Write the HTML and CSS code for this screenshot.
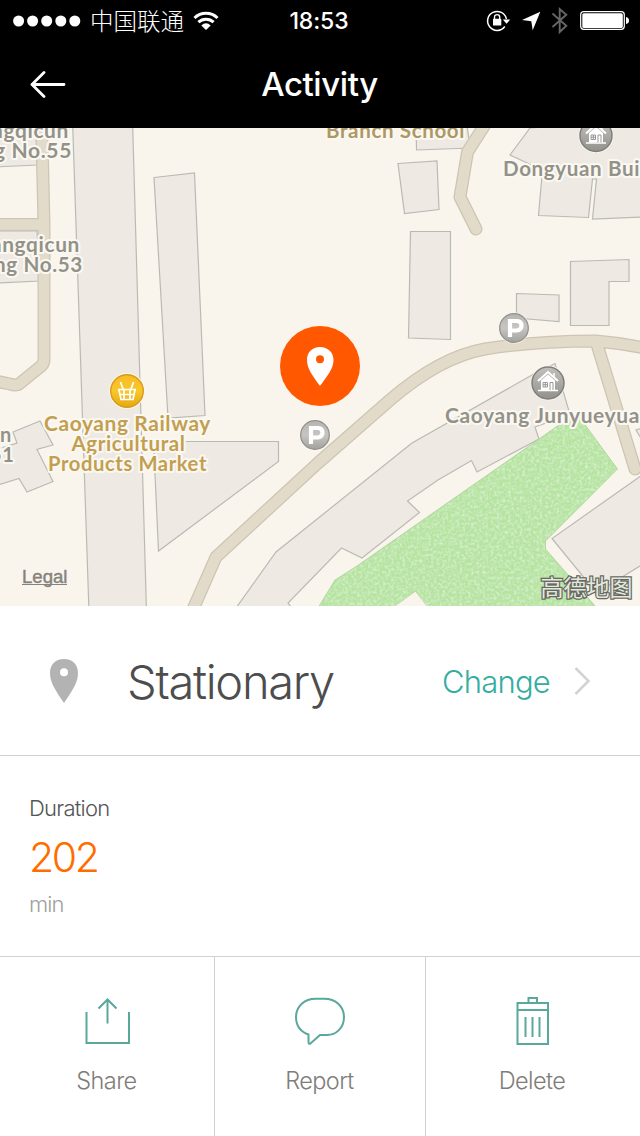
FILE: index.html
```html
<!DOCTYPE html>
<html lang="en">
<head>
<meta charset="utf-8">
<title>Activity</title>
<link rel="stylesheet" href="styles.css">
</head>
<body>
<main class="screen">
  <header class="header">
    <div class="status">
      <div class="status-left">
        <svg class="dots" width="68" height="12" viewBox="0 0 68 12" fill="#fff"><circle cx="5.6" cy="6" r="5.5"/><circle cx="19.6" cy="6" r="5.5"/><circle cx="33.7" cy="6" r="5.5"/><circle cx="47.8" cy="6" r="5.5"/><circle cx="61.8" cy="6" r="5.5"/></svg>
        <span class="carrier">中国联通</span>
        <svg class="wifi" width="26" height="20" viewBox="0 0 26 20" fill="none" stroke="#fff" stroke-width="3"><path d="M1.500 7A16.500 16.500 0 0 1 24.500 7M5.400 11.200A11 11 0 0 1 20.600 11.200"/><path d="M8.300 14.400Q13 10.200 17.700 14.400L13 19Z" fill="#fff" stroke="none"/></svg>
      </div>
      <span class="time">18:53</span>
      <svg class="status-right" width="144" height="32" viewBox="486 5 144 32">
        <path d="M504.800 26.500A9.500 9.500 0 1 1 506.400 19" fill="none" stroke="#fff" stroke-width="1.500"/>
        <path d="M502.800 19.500H510.200L506.500 23.800Z" fill="#fff"/>
        <rect x="493" y="18.800" width="8.300" height="6.700" rx=".6" fill="#fff"/>
        <path d="M494.500 19V17.200A2.600 2.600 0 0 1 499.700 17.200V19" fill="none" stroke="#fff" stroke-width="1.400"/>
        <path d="M540.300 11.800L532.700 30.200L531.300 21.300L522 20Z" fill="#fff"/>
        <path d="M552.500 13.500L566.300 25.800L559.700 32V9L566.300 14.800L552.500 27" fill="none" stroke="#666" stroke-width="1.900"/>
        <rect x="580.700" y="11.700" width="43.600" height="17.600" rx="3" fill="none" stroke="#fff" stroke-width="1.200"/>
        <rect x="582.300" y="13.200" width="40.500" height="14.700" rx="1.500" fill="#fff"/>
        <path d="M626 17Q629 17.500 629 20.500T626 24Z" fill="#fff"/>
      </svg>
    </div>
    <nav class="nav">
      <svg class="back" width="36" height="28" viewBox="0 0 36 28" fill="none" stroke="#fff" stroke-width="2.800" stroke-linecap="round" stroke-linejoin="round"><path d="M34 14.500H2M14 2.500L2 14.500L14 26.500"/></svg>
      <h1 class="title">Activity</h1>
    </nav>
  </header>

  <svg class="map" width="640" height="478" viewBox="0 128 640 478">
    <defs>
      <filter id="grain" x="0" y="0" width="100%" height="100%">
        <feTurbulence type="fractalNoise" baseFrequency=".35" numOctaves="2" seed="4"/>
        <feColorMatrix values="0 0 0 0 .81  0 0 0 0 .93  0 0 0 0 .75  1.400 0 0 0 -.55"/>
        <feComposite in2="SourceGraphic" operator="in" result="n"/>
        <feMerge><feMergeNode in="SourceGraphic"/><feMergeNode in="n"/></feMerge>
      </filter>
      <linearGradient id="gray" x2="0" y2="1"><stop stop-color="#c2c1be"/><stop offset="1" stop-color="#92918c"/></linearGradient>
      <linearGradient id="silver" x2="0" y2="1"><stop stop-color="#b5b4b1"/><stop offset=".5" stop-color="#c6c5c2"/><stop offset="1" stop-color="#a2a19d"/></linearGradient>
      <linearGradient id="gold" x2="0" y2="1"><stop stop-color="#fbbb25"/><stop offset=".5" stop-color="#f7c82a"/><stop offset="1" stop-color="#e5a911"/></linearGradient>
      <g id="house" fill="none" stroke="#fff" stroke-width="1.500">
        <circle r="17.500" fill="#faf6ef" stroke="none"/>
        <circle r="16" fill="url(#gray)" stroke="#7f7e7a" stroke-width="1.500"/>
        <path d="M-10 -2L0 -11L10 -2" stroke-width="2"/>
        <path d="M-7 -2.500L0 -8.500L7 -2.500V7H-7Z" fill="#fff" stroke="none"/>
        <path d="M-10 7.500H10M6 -10V-5" />
        <path d="M-5 -.5H-.5V4H-5ZM-2.700 -.5V4M-5 1.700H-.5M2 7V-.5H5V7" stroke="#999894" stroke-width="1"/>
      </g>
      <g id="parking">
        <circle r="15.500" fill="#faf6ef"/>
        <circle r="14.300" fill="url(#silver)" stroke="#91908b" stroke-width="1.300"/>
        <path d="M-4 9V-7H3Q7.500 -6.800 7.500 -2.500T3 2.500H-4" fill="none" stroke="#fff" stroke-width="4.200"/>
      </g>
    </defs>
    <rect y="128" width="640" height="478" fill="#f9f5ec"/>
    <g class="building">
      <path d="M-5 128H37V165L-5 167ZM-5 231H37L40 281L-5 283Z"/>
      <path d="M72.500 120L132.500 120L146.500 612H89Z"/>
      <path d="M154 177.500L194.500 173L205 415.500L168 418Z"/>
      <path d="M153.500 441.500H278.500V461.500L158.500 551Z"/>
      <path d="M-5 450L17 443L13 432L40 421L53 445L37 449.500L53 481.500L27 492L19 478.500L-5 486Z"/>
      <path d="M416 120H466L470.500 148L416.500 150ZM398 163.500L437 161L439 209.500L404.500 213.500ZM410.500 231.500H450.500V339.500L408.500 338Z"/>
      <path d="M530 128L510 155L542.500 170L538.500 215.500L588.500 217.500L592.500 179H596.500L592.500 219L645 217V120Z"/>
      <path d="M516.500 293.500L559 295V321.500L516.500 318ZM570.500 261.500L629 259.500V281.500H609V325.500H570.500Z"/>
      <path d="M236 608L276 552L412 443L532 375L555 363.500L569 411L560 418L535 427L539 439L477 472L471.500 460.500L438 480L407.500 501L419.500 512.500L362 558L341.500 548L288 603L292 608Z"/>
      <path d="M645 473L552 538.500L590 585L601 590L645 563ZM645 427L636 430L645 445Z"/>
    </g>
    <path filter="url(#grain)" d="M318 608L335 580L357 566L539 439L576 413L583 422L617.500 469L545.500 541V549L597 608H430L415.500 591L391 608H316Z" fill="#b5e3a0"/>
    <path d="M318 608L335 580L357 566L539 439L576 413L583 422L617.500 469L545.500 541V549L595 606M427 606L415.500 591L395 606" fill="none" stroke="#a9cf99" stroke-width=".8"/>
    <g class="road-edge">
      <path d="M-5 224.500H44M41.500 120L44 224V360Q44 364 40 367L19 384Q16 386 10 384L-5 381"/>
      <path d="M190 616L216 557L318 463L390 400Q440 357 485 349Q535 341 596 341Q620 343 645 348M596 341L635 469M488 120L467.500 152L460 197L476 229"/>
    </g>
    <g class="road">
      <path d="M-5 224.500H44M41.500 120L44 224V360Q44 364 40 367L19 384Q16 386 10 384L-5 381"/>
      <path d="M190 616L216 557L318 463L390 400Q440 357 485 349Q535 341 596 341Q620 343 645 348M596 341L635 469M488 120L467.500 152L460 197L476 229"/>
    </g>
    <g class="label label-gray">
      <text x="-9" y="138" textLength="78" lengthAdjust="spacingAndGlyphs">ngqicun</text>
      <text x="-6" y="158" textLength="78" lengthAdjust="spacingAndGlyphs">g No.55</text>
      <text x="-9" y="252" textLength="89" lengthAdjust="spacingAndGlyphs">angqicun</text>
      <text x="-6" y="272" textLength="89" lengthAdjust="spacingAndGlyphs">ng No.53</text>
      <text x="0" y="442">n</text>
      <text x="-10" y="462">51</text>
      <text x="503" y="176" textLength="137" lengthAdjust="spacingAndGlyphs">Dongyuan Bui</text>
      <text x="445" y="422.500" textLength="195" lengthAdjust="spacingAndGlyphs">Caoyang Junyueyua</text>
    </g>
    <g class="label label-tan">
      <text x="326" y="137.500" textLength="139" lengthAdjust="spacingAndGlyphs">Branch School</text>
    </g>
    <g class="label label-gold">
      <text x="44" y="431" textLength="167" lengthAdjust="spacingAndGlyphs">Caoyang Railway</text>
      <text x="71.500" y="451" textLength="114" lengthAdjust="spacingAndGlyphs">Agricultural</text>
      <text x="48" y="471" textLength="159" lengthAdjust="spacingAndGlyphs">Products Market</text>
    </g>
    <use href="#house" x="596" y="135.500"/>
    <use href="#house" x="548" y="383"/>
    <use href="#parking" x="514" y="328"/>
    <use href="#parking" x="315" y="435"/>
    <g transform="translate(127 391)">
      <circle r="18" fill="#fdf9ee"/>
      <circle r="16.300" fill="url(#gold)" stroke="#d89a1c" stroke-width="1.400"/>
      <path d="M-9 -1.500H9M-8 -1L-6 8.500H6L8 -1M-7 3.500H7M-3 -1V8M3 -1V8M-4 -2L-6.500 -9M4 -2L6.500 -9" fill="none" stroke="#fff" stroke-width="1.700"/>
    </g>
    <circle cx="320" cy="366" r="40" fill="#ff5800"/>
    <path fill-rule="evenodd" fill="#fff" d="M320 347C312 347 307 352.500 307 360C307 369 313 376 320 386C327 376 333.500 369 333.500 360C333.500 352.500 328 347 320 347ZM320 355.300A4 4 0 1 1 320 363.300A4 4 0 1 1 320 355.300Z"/>
    <text class="legal" x="22" y="583" textLength="45.500" lengthAdjust="spacingAndGlyphs">Legal</text>
    <path d="M22 584.500H67" stroke="#85837e" stroke-width="1"/>
    <text class="amap" x="540.500" y="596" textLength="92" lengthAdjust="spacingAndGlyphs">高德地图</text>
  </svg>

  <section class="kind">
    <svg class="kind-pin" width="28" height="44" viewBox="0 0 28 44"><path fill-rule="evenodd" fill="#b3b3b3" d="M14 0C5 0 0 6 0 14C0 24 6 32 14 44C22 32 28 24 28 14C28 6 23 0 14 0ZM14 9.300A4 4 0 1 1 14 17.300A4 4 0 1 1 14 9.300Z"/></svg>
    <h2 class="kind-name">Stationary</h2>
    <a class="change">Change</a>
    <svg class="chevron" width="17" height="28" viewBox="0 0 17 28" fill="none" stroke="#d3d3d3" stroke-width="2.500"><path d="M1.500 1L14.500 14L1.500 27"/></svg>
  </section>

  <section class="duration">
    <div class="duration-label">Duration</div>
    <div class="duration-value">202</div>
    <div class="duration-unit">min</div>
  </section>

  <footer class="actions">
    <a class="action">
      <svg width="50" height="48" viewBox="82 997 50 48" fill="none" stroke="#5aa79c" stroke-width="2"><path d="M86.500 1012V1043H129V1012M107.500 1023.500V1000M98.500 1008.500L107.500 999.500L116.500 1008.500"/></svg>
      <span class="action-label">Share</span>
    </a>
    <a class="action">
      <svg width="52" height="48" viewBox="294 997 52 48" fill="none" stroke="#5aa79c" stroke-width="2"><path d="M316 998.800H324C336 998.800 344 1006.500 344 1017C344 1028 336 1035 327 1035H320L310.500 1043.500Q308.500 1044.500 308.500 1042V1034.500C300 1031.500 296 1025 296 1017C296 1006.500 304 998.800 316 998.800Z"/></svg>
      <span class="action-label">Report</span>
    </a>
    <a class="action">
      <svg width="36" height="50" viewBox="515 996 36 50" fill="none" stroke="#5aa79c" stroke-width="2"><path d="M517.500 1003H548V1044H517.500ZM517.500 1010H548M528.500 1003V998H537V1003M525.500 1017V1037M532.500 1017V1037M539.500 1017V1037"/></svg>
      <span class="action-label delete">Delete</span>
    </a>
  </footer>
</main>
</body>
</html>
```
FILE: styles.css
```css
* { box-sizing: border-box; }
body { margin: 0; background: #fff; font-family: Inter, "Liberation Sans", "Noto Sans CJK SC", sans-serif; font-weight: 300; }
svg { display: block; flex: none; }
.screen { width: 640px; height: 1136px; background: #fff; overflow: hidden; }

.header { height: 128px; background: #000; color: #fff; }
.status { height: 40px; display: grid; grid-template-columns: 1fr auto 1fr; align-items: center; padding: 0 10px 0 13px; }
.status-left { display: flex; align-items: center; margin-right: -3px; }
.carrier { margin-left: 9px; font: 300 23.5px/36px "Noto Sans CJK SC", sans-serif; padding-bottom: 3px; }
.wifi { margin-left: 9px; }
.time { font-size: 23px; line-height: 42px; font-weight: 500; letter-spacing: -0.1px; margin-left: -5px; }
.status-right { justify-self: end; }
.nav { height: 88px; display: grid; grid-template-columns: 1fr auto 1fr; align-items: center; padding: 0 30px; }
.title { margin: 0 0 0 -1px; font-size: 33px; line-height: 42px; font-weight: 500; letter-spacing: -0.4px; }

.building path { fill: #eeeae3; stroke: #babab5; stroke-width: 1.200; }
.road-edge path, .road path { fill: none; stroke-linecap: round; stroke-linejoin: round; }
.road-edge path { stroke: #cdc5b4; stroke-width: 13; }
.road path { stroke: #e3dbc9; stroke-width: 10.500; }
.label { font-family: Lato, sans-serif; font-weight: 700; font-size: 20px; letter-spacing: .6px; paint-order: stroke; stroke: #fbf8f1; stroke-width: 4px; stroke-linejoin: round; }
.label-gray { fill: #93928a; }
.label-tan { fill: #ad9865; }
.label-gold { fill: #c29f50; }
.legal { font: 400 18px "Liberation Sans", sans-serif; fill: #85837e; stroke: #85837e; stroke-width: .4; }
.amap { font: 400 23px "Noto Sans CJK SC", sans-serif; fill: #e4e8dc; paint-order: stroke; stroke: #666862; stroke-width: 2.5px; }

.kind { height: 150px; display: flex; align-items: center; padding: 3px 49px 0 50px; border-bottom: 1px solid #d0d0d0; }
.kind-pin { margin-top: -2px; }
.kind-name { margin: 0 0 0 49px; flex: 1; font-size: 47px; line-height: 60px; font-weight: 300; letter-spacing: -1.3px; color: #4d4d4d; }
.change { font-size: 31px; line-height: 60px; color: #35ada0; letter-spacing: -0.8px; }
.chevron { margin-left: 24px; margin-top: -2px; }

.duration { height: 201px; padding: 38px 30px 0 29px; border-bottom: 1px solid #d2d2ca; }
.duration-label { font-size: 22px; line-height: 28px; color: #555; letter-spacing: -0.75px; }
.duration-value { font-size: 41px; line-height: 70px; color: #ff6d00; letter-spacing: -2.4px; }
.duration-unit { font-size: 22px; line-height: 24px; color: #a0a0a0; letter-spacing: -0.9px; }

.actions { display: grid; grid-template-columns: 215px 211px 214px; height: 179px; }
.action { display: flex; flex-direction: column; align-items: center; justify-content: flex-start; padding-top: 40px; border-right: 1px solid #d0d0d0; }
.action:last-child { border-right: 0; padding-top: 39px; }
.action:last-child svg { margin-left: -1px; }
.action-label { margin-top: 22px; font-size: 23.500px; line-height: 28px; color: #7f7d79; letter-spacing: -0.6px; margin-left: -1px; }
.delete { margin-top: 21px; margin-left: -2px; }
```
